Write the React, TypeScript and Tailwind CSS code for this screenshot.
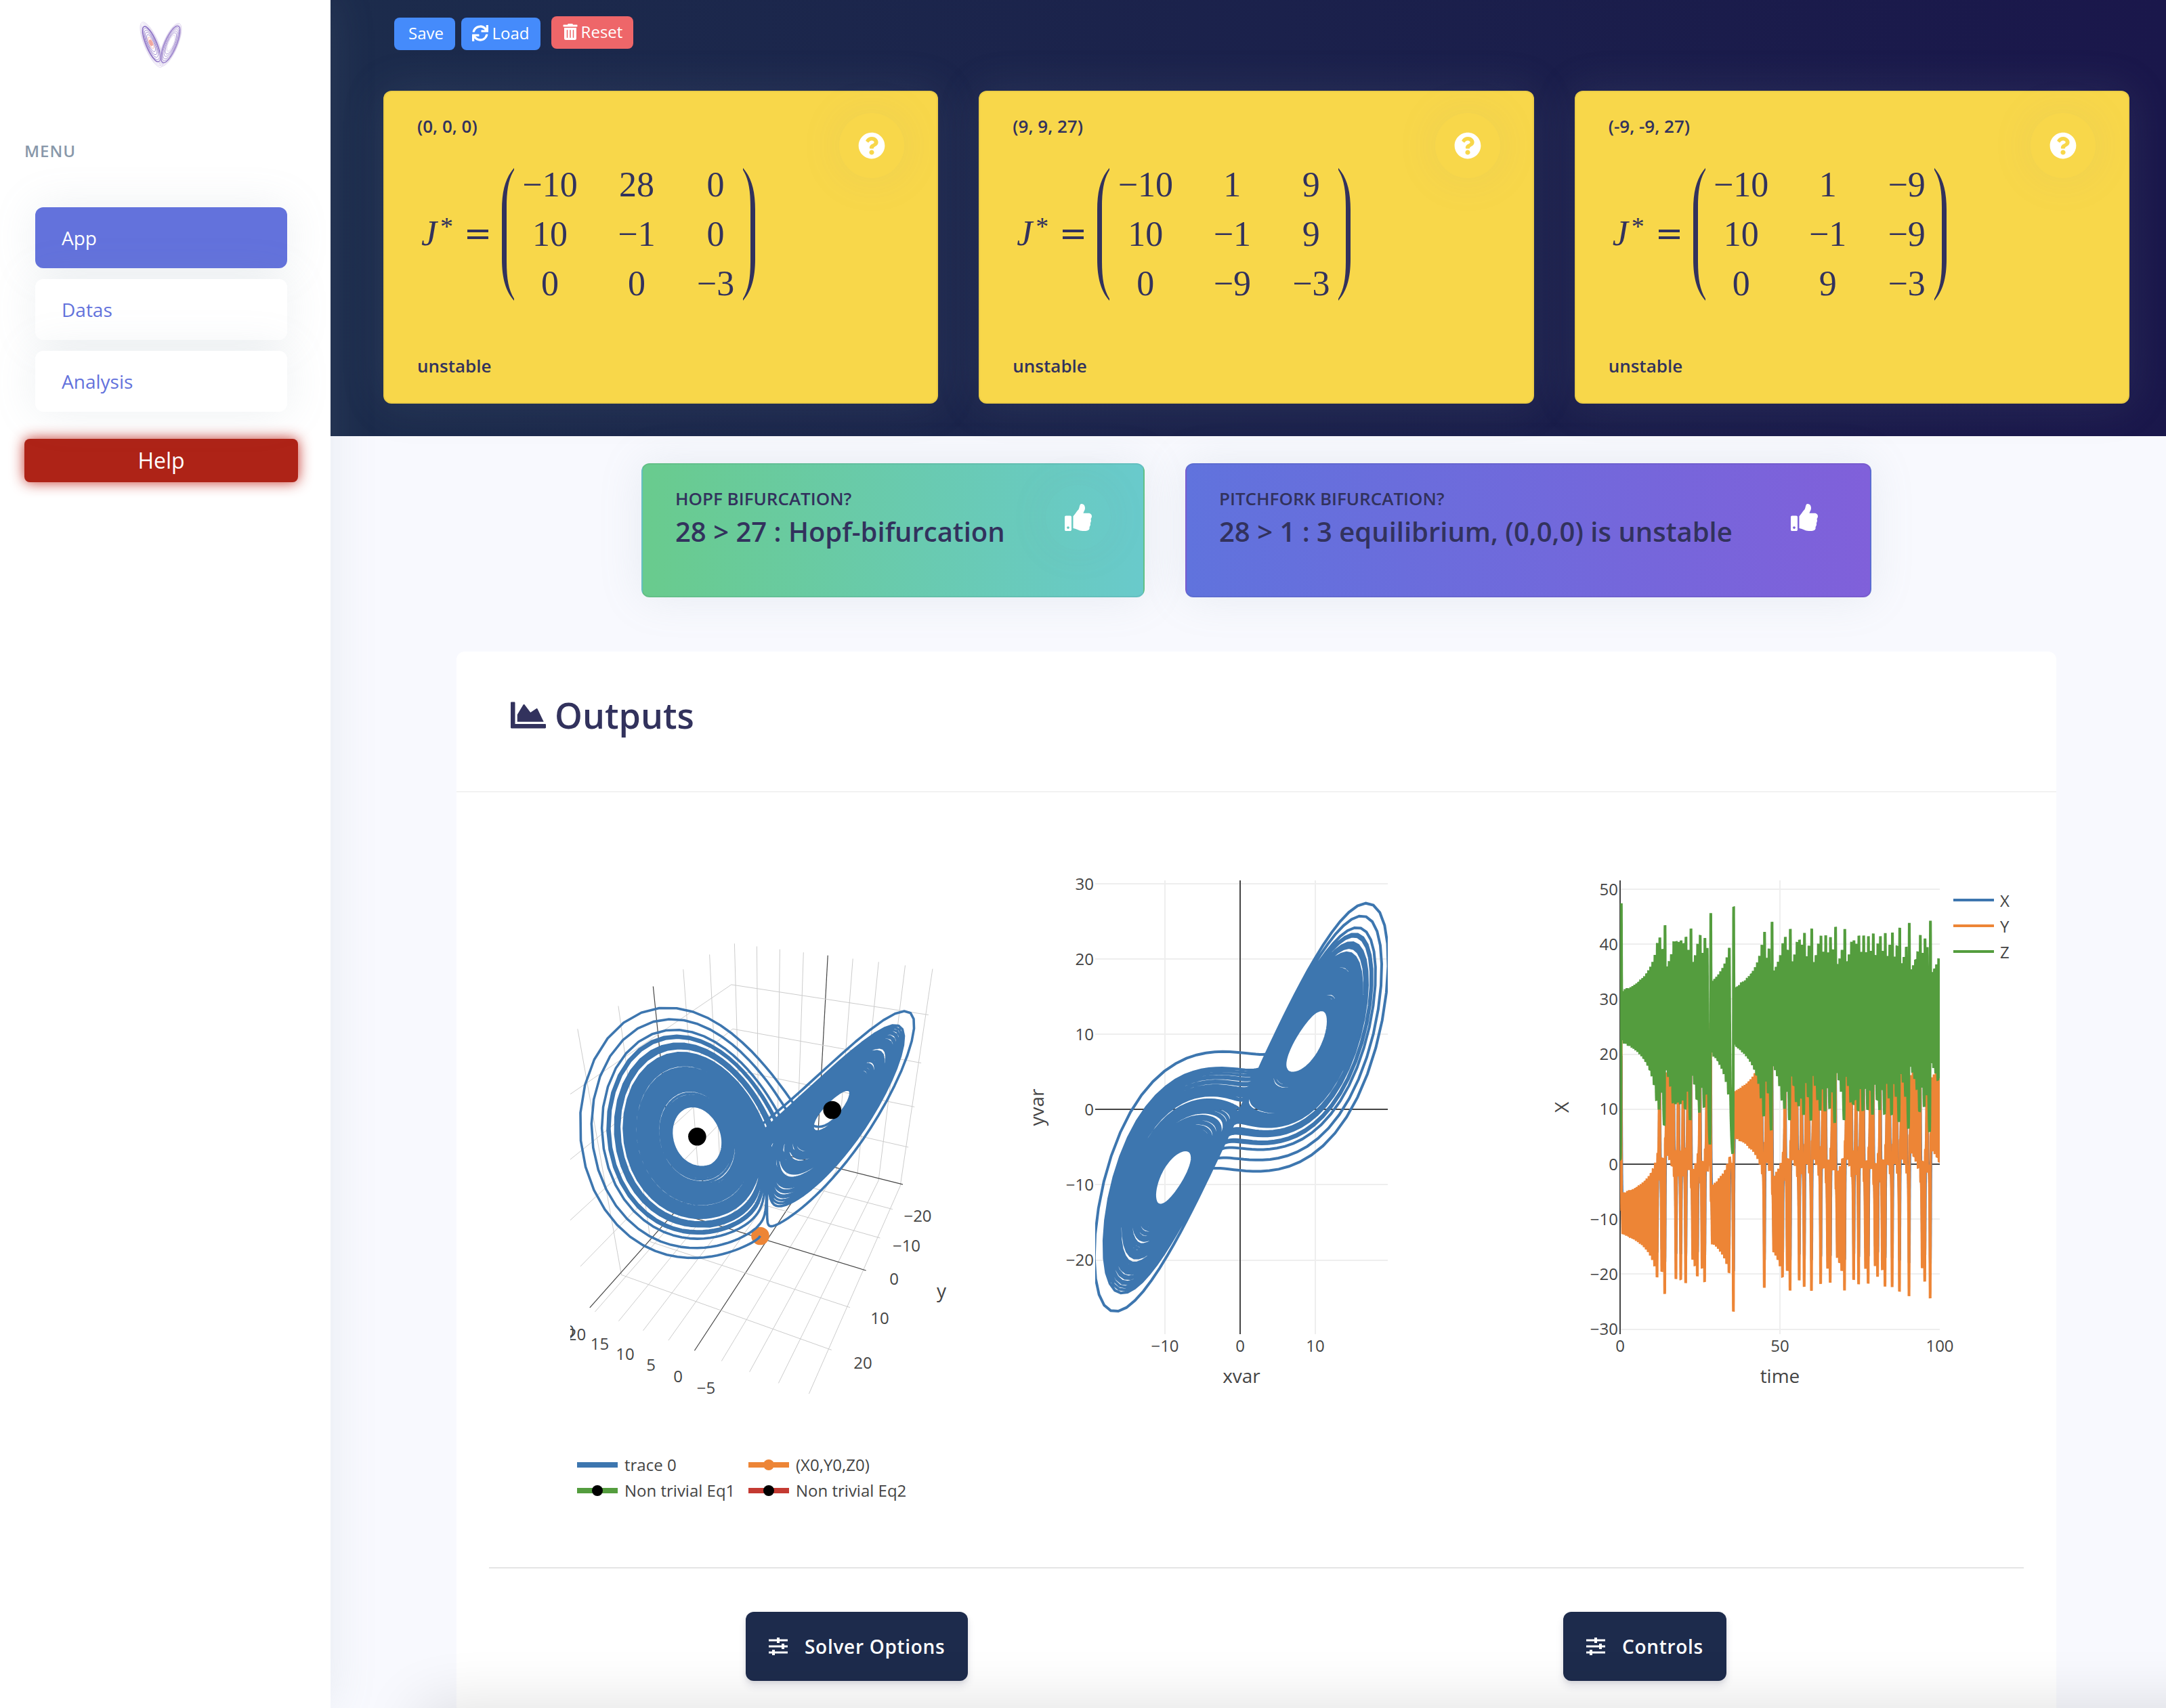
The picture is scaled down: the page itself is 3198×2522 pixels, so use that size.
import { FaQuestionCircle, FaThumbsUp, FaSync, FaTrashAlt, FaChartArea } from "react-icons/fa";

type Vec3 = [number, number, number];

const DT = 0.01;

/** One RK4 step of the Lorenz system (sigma = 10, rho = 28, beta = 3). */
function step([x, y, z]: Vec3): Vec3 {
  const a0 = 10 * (y - x), a1 = x * (28 - z) - y, a2 = x * y - 3 * z;
  let X = x + 0.005 * a0, Y = y + 0.005 * a1, Z = z + 0.005 * a2;
  const b0 = 10 * (Y - X), b1 = X * (28 - Z) - Y, b2 = X * Y - 3 * Z;
  X = x + 0.005 * b0; Y = y + 0.005 * b1; Z = z + 0.005 * b2;
  const c0 = 10 * (Y - X), c1 = X * (28 - Z) - Y, c2 = X * Y - 3 * Z;
  X = x + DT * c0; Y = y + DT * c1; Z = z + DT * c2;
  const d0 = 10 * (Y - X), d1 = X * (28 - Z) - Y, d2 = X * Y - 3 * Z;
  return [
    x + (DT / 6) * (a0 + 2 * b0 + 2 * c0 + d0),
    y + (DT / 6) * (a1 + 2 * b1 + 2 * c1 + d1),
    z + (DT / 6) * (a2 + 2 * b2 + 2 * c2 + d2),
  ];
}

const corrections = [-1, -6, -3, -38, -2, -25, 13, 0, -29, -1, 1, -20, -13, 1, 3, -7, 5, 6, -14, 1, 4, -11, 67, -3, -1, -6, -14, -1, 0];

function solve(): Vec3[] {
  const out: Vec3[] = [[1, 1, 1]];
  let s: Vec3 = [1, 1, 1];
  for (let i = 0; i < 10000; i++) {
    if (i >= 1300 && (i - 1300) % 300 === 0) s = [s[0], s[1], s[2] + corrections[(i - 1300) / 300] * 0.0025];
    s = step(s);
    out.push(s);
  }
  return out;
}
const orbit = solve();

const toPath = (pts: [number, number][]) => "M" + pts.map(([x, y]) => x.toFixed(1) + "," + y.toFixed(1)).join("L");

// Perspective camera of the 3D scene: rows of a 3x4 matrix whose last entry is 1.
const CAM = [-0.44413, -0.21254, -0.00917, 0.10764, -0.11302, 0.25032, -0.40751, 0.42685, 0.0554, -0.12228, -0.08851];

function project(px: number, py: number, pz: number): [number, number] {
  const x = px / 20, y = py / 20, z = pz / 20;
  const w = CAM[8] * x + CAM[9] * y + CAM[10] * z + 1;
  return [
    1100 + (300 * (CAM[0] * x + CAM[1] * y + CAM[2] * z + CAM[3])) / w,
    1700 + (300 * (CAM[4] * x + CAM[5] * y + CAM[6] * z + CAM[7])) / w,
  ];
}

const BOX = { x: [-20.5, 21], y: [-28.8, 29.4], z: [-0.6, 48.7] };

function Line3({ a, b, zero }: { a: Vec3; b: Vec3; zero?: boolean }) {
  const [x1, y1] = project(...a);
  const [x2, y2] = project(...b);
  return <line x1={x1} y1={y1} x2={x2} y2={y2} stroke={zero ? "#444" : "#ccc"} strokeWidth={zero ? 1.2 : 1} />;
}

function Attractor3D() {
  const xs = [-20, -15, -10, -5, 0, 5, 10, 15, 20];
  const ys = [-20, -10, 0, 10, 20];
  const zs = [0, 10, 20, 30, 40];
  const [x0, x1] = BOX.x;
  const [y0, y1] = BOX.y;
  const [z0, z1] = BOX.z;
  const labels: [string, number, number][] = [
    ["−20", 1355, 1795], ["−10", 1338.5, 1839], ["0", 1320, 1888.5], ["10", 1299, 1946], ["20", 1274, 2012],
    ["20", 851.5, 1970], ["15", 885.5, 1984.5], ["10", 923, 1999.5], ["5", 961, 2015.5], ["0", 1001, 2032], ["−5", 1042.5, 2049],
    ["−10", 1090, 2066], ["0", 841, 1965],
  ];
  const origin = project(1, 1, 1);
  const eq1 = project(9, 9, 27);
  const eq2 = project(-9, -9, 27);
  return (
    <svg className="block h-[768px] w-[568px]" viewBox="842 1290 568 768">
      {xs.map((x) => (
        <g key={"x" + x}>
          <Line3 a={[x, y0, z0]} b={[x, y1, z0]} zero={x === 0} />
          <Line3 a={[x, y0, z0]} b={[x, y0, z1]} zero={x === 0} />
        </g>
      ))}
      {ys.map((y) => (
        <g key={"y" + y}>
          <Line3 a={[x0, y, z0]} b={[x1, y, z0]} zero={y === 0} />
          <Line3 a={[x1, y, z0]} b={[x1, y, z1]} zero={y === 0} />
        </g>
      ))}
      {zs.map((z) => (
        <g key={"z" + z}>
          <Line3 a={[x0, y0, z]} b={[x1, y0, z]} zero={z === 0} />
          <Line3 a={[x1, y0, z]} b={[x1, y1, z]} zero={z === 0} />
        </g>
      ))}
      <circle cx={origin[0]} cy={origin[1]} r="13.3" fill="#ed8536" />
      <path d={toPath(orbit.map((p) => project(...p)))} fill="none" stroke="#3d76af" strokeWidth="3.6" strokeLinejoin="round" />
      <circle cx={eq1[0]} cy={eq1[1]} r="13.3" />
      <circle cx={eq2[0]} cy={eq2[1]} r="13.3" />
      <g fontSize="24" fill="#444" textAnchor="middle">
        {labels.map(([t, x, y], i) => (
          <text key={i} x={x} y={y + 8.6}>{t}</text>
        ))}
        <text x="1390" y="1916" fontSize="28">y</text>
      </g>
    </svg>
  );
}

function PhasePlot() {
  const px = (x: number) => 1831 + x * 11.07;
  const py = (y: number) => 1638.3 - y * 11.11;
  return (
    <svg className="block h-[768px] w-[560px]" viewBox="1500 1290 560 768">
      <clipPath id="phase-clip"><rect x="1617" y="1300" width="432" height="670" /></clipPath>
      <g stroke="#eee" strokeWidth="2">
        {[-10, 10].map((x) => <line key={x} x1={Math.round(px(x))} x2={Math.round(px(x))} y1="1300" y2="1970" />)}
        {[-20, -10, 10, 20, 30].map((y) => <line key={y} x1="1617" x2="2049" y1={Math.round(py(y))} y2={Math.round(py(y))} />)}
      </g>
      <g stroke="#444" strokeWidth="2">
        <line x1="1831" x2="1831" y1="1300" y2="1970" />
        <line x1="1617" x2="2049" y1="1638" y2="1638" />
      </g>
      <path clipPath="url(#phase-clip)" d={toPath(orbit.map(([x, y]) => [px(x), py(y)]))} fill="none" stroke="#3d76af" strokeWidth="4" strokeMiterlimit="2" />
      <g fontSize="24" fill="#444">
        {[30, 20, 10, 0, -10, -20].map((y) => (
          <text key={y} x="1615" y={py(y) + 8.6} textAnchor="end">{String(y).replace("-", "−")}</text>
        ))}
        <text x="1720" y="1996" textAnchor="middle">−10</text>
        <text x="1831" y="1996" textAnchor="middle">0</text>
        <text x="1942" y="1996" textAnchor="middle">10</text>
      </g>
      <g fontSize="28" fill="#444" textAnchor="middle">
        <text x="1833" y="2042">xvar</text>
        <text transform="translate(1541 1635) rotate(-90)">yvar</text>
      </g>
    </svg>
  );
}

function TimePlot() {
  const px = (t: number) => 2392 + t * 4.72;
  const py = (v: number) => 1719 - v * 8.121;
  const series: [string, number, string][] = [["X", 0, "#3d76af"], ["Y", 1, "#ed8536"], ["Z", 2, "#549d3e"]];
  return (
    <svg className="block h-[768px] w-[700px]" viewBox="2280 1290 700 768">
      <clipPath id="time-clip"><rect x="2392" y="1300" width="472" height="670" /></clipPath>
      <g stroke="#eee" strokeWidth="2">
        <line x1="2628" x2="2628" y1="1300" y2="1970" />
        {[-30, -20, -10, 10, 20, 30, 40, 50].map((v) => <line key={v} x1="2392" x2="2864" y1={Math.round(py(v))} y2={Math.round(py(v))} />)}
      </g>
      <g stroke="#444" strokeWidth="2">
        <line x1="2392" x2="2392" y1="1300" y2="1970" />
        <line x1="2392" x2="2864" y1="1719" y2="1719" />
      </g>
      <g clipPath="url(#time-clip)">
        {series.map(([name, k, color]) => (
          <path key={name} d={toPath(orbit.map((p, i) => [px(i * DT), py(p[k])]))} fill="none" stroke={color} strokeWidth="4" strokeMiterlimit="2" />
        ))}
      </g>
      <g fontSize="24" fill="#444">
        {[50, 40, 30, 20, 10, 0, -10, -20, -30].map((v) => (
          <text key={v} x="2389" y={py(v) + 8.6} textAnchor="end">{String(v).replace("-", "−")}</text>
        ))}
        {[0, 50, 100].map((t) => <text key={t} x={px(t)} y="1996" textAnchor="middle">{t}</text>)}
        {series.map(([name, k, color]) => (
          <g key={name}>
            <line x1="2884" x2="2944" y1={1329 + k * 38} y2={1329 + k * 38} stroke={color} strokeWidth="4" />
            <text x="2953" y={1339 + k * 38}>{name}</text>
          </g>
        ))}
      </g>
      <g fontSize="28" fill="#444" textAnchor="middle">
        <text x="2628" y="2042">time</text>
        <text transform="translate(2316 1635) rotate(-90)">X</text>
      </g>
    </svg>
  );
}

function LegendItem({ label, color, dot }: { label: string; color: string; dot?: string }) {
  return (
    <div className="flex h-[38px] items-center gap-[10px] text-[24px] leading-[38px] text-[#444]">
      <svg className="h-[20px] w-[60px]" viewBox="0 0 60 20">
        <rect y="6" width="60" height="8" fill={color} />
        {dot && <circle cx="30" cy="10" r="8" fill={dot} />}
      </svg>
      <span>{label}</span>
    </div>
  );
}

function Paren({ flip }: { flip?: boolean }) {
  return (
    <svg className={flip ? "-ml-[5px] h-[196px] w-[18px] -scale-x-100" : "h-[196px] w-[18px]"} viewBox="0 0 18 196">
      <path fill="#32325d" d="M18 0C6 14 0 32 0 62V134C0 164 6 182 18 196V193C10 180 7 164 7 138V58C7 32 10 16 18 3Z" />
    </svg>
  );
}

function EquilibriumCard({ point, matrix }: { point: string; matrix: string[][] }) {
  return (
    <div className="flex h-[462px] justify-between rounded-[12px] border-2 border-black/5 bg-[#f8d74a] px-[48px] pt-[31px] shadow-[0_0_64px_rgba(136,152,170,0.15)]">
      <div className="text-[#32325d]">
        <div className="text-[26px] leading-[38px] font-semibold">{point}</div>
        <div className="mt-[43px] flex h-[196px] items-center font-['Liberation_Serif',serif] text-[52px] leading-none">
          <span className="w-[34px] pb-[3px] pl-[6px] italic">J</span>
          <span className="w-[24px] pb-[24px] text-[38px]">*</span>
          <svg className="ml-[16px] h-[14px] w-[31px]" viewBox="0 0 31 14">
            <path stroke="#32325d" strokeWidth="4" d="M0 2H31M0 12H31" />
          </svg>
          <div className="ml-[20px] flex items-center">
            <Paren />
            <div className="-mt-[1px] -ml-[4px] grid grid-cols-[114px_142px_91px] text-center">
              {matrix.flat().map((v, i) => (
                <span key={i} className="h-[73px] leading-[73px]">{v}</span>
              ))}
            </div>
            <Paren flip />
          </div>
        </div>
        <div className="mt-[76px] text-[26px] leading-[40px] font-semibold">unstable</div>
      </div>
      <div className="flex size-[96px] items-center justify-center rounded-full bg-[#f8d74a] text-white shadow-[0_0_64px_rgba(136,152,170,0.1)]">
        <FaQuestionCircle className="size-[40px]" />
      </div>
    </div>
  );
}

function SliderIcon() {
  return (
    <svg className="h-[26px] w-[28px]" viewBox="0 0 28 26">
      <path stroke="#fff" strokeWidth="3" d="M0 4H28M0 13H28M0 22H28" />
      <path stroke="#fff" strokeWidth="4" d="M14 0V8M21 9V17M7 18V26" />
    </svg>
  );
}

function DarkButton({ label }: { label: string }) {
  return (
    <button className="flex h-[102px] items-center gap-[25px] rounded-[12px] bg-[#1d2b4c] px-[34px] text-[28px] font-semibold tracking-[0.025em] text-white shadow-[0_8px_12px_rgba(50,50,93,0.11),0_2px_6px_rgba(0,0,0,0.08)]">
      <SliderIcon />
      {label}
    </button>
  );
}

const rings = [0.12, 0.25, 0.38, 0.5, 0.6, 0.7, 0.78, 0.86, 0.93, 1];

function Logo() {
  return (
    <svg className="mt-[30px] ml-[203px] h-[74px] w-[68px]" viewBox="0 0 68 74" fill="none">
      <g transform="translate(21 36) rotate(-23)">
        {rings.map((r) => (
          <ellipse key={r} rx={10.5 * r} ry={36 * r} cy={(r - 1) * 4} stroke={r < 0.35 ? "#f0a59c" : r > 0.8 ? "#dcd2ec" : "#8a6fc4"} strokeWidth={r === 0.78 ? 1.7 : 0.7} />
        ))}
        <ellipse rx="2.5" ry="5" cy="-3" fill="#f2a8a0" />
      </g>
      <g transform="translate(48.5 36) rotate(23)">
        {rings.slice(2).map((r) => (
          <ellipse key={r} rx={10.5 * r} ry={34 * r} cy={(r - 1) * 4} stroke={r > 0.9 || r < 0.45 ? "#d3c6e6" : "#9a82cc"} strokeWidth={r === 0.86 ? 1.7 : 0.7} />
        ))}
      </g>
    </svg>
  );
}

export default function App() {
  return (
    <div className="relative flex h-[2522px] w-[3198px] overflow-hidden bg-[#f8f9fe] font-['Open_Sans',sans-serif]">
      <aside className="relative z-10 w-[488px] shrink-0 bg-white shadow-[0_0_64px_rgba(136,152,170,0.15)]">
        <Logo />
        <div className="mt-[99px] ml-[36px] text-[24px] leading-[40px] font-semibold tracking-[0.04em] text-[#8898aa]">MENU</div>
        <nav className="mt-[63px] ml-[52px] flex w-[372px] flex-col gap-[16px] text-[28px] text-[#6372dc]">
          <a className="flex h-[90px] items-center rounded-[12px] bg-[#6372dc] pl-[39px] text-white shadow-[0_0_64px_rgba(136,152,170,0.15)]">App</a>
          <a className="flex h-[90px] items-center rounded-[12px] bg-white pl-[39px] shadow-[0_0_64px_rgba(136,152,170,0.15)]">Datas</a>
          <a className="flex h-[90px] items-center rounded-[12px] bg-white pl-[39px] shadow-[0_0_64px_rgba(136,152,170,0.15)]">Analysis</a>
        </nav>
        <button className="mt-[40px] ml-[36px] flex h-[64px] w-[404px] items-center justify-center rounded-[8px] bg-[#ae2317] text-[32px] text-white shadow-[0_0_20px_rgba(190,30,20,0.9)]">Help</button>
      </aside>

      <main className="min-w-0 flex-1">
        <header className="h-[644px] bg-[linear-gradient(87deg,#1c2c4c_0%,#1a174b_100%)] pt-[24px]">
          <div className="ml-[94px] flex h-[50px] text-[24px] leading-[46px] text-white">
            <button className="mt-[2px] h-[48px] w-[90px] rounded-[8px] bg-[#458bfb] pb-[2px] pl-[4px]">Save</button>
            <button className="mt-[2px] ml-[9px] flex h-[48px] w-[117px] items-center justify-center gap-[6px] rounded-[8px] bg-[#458bfb] pr-[1px] pb-[2px]">
              <FaSync className="size-[24px]" />
              Load
            </button>
            <button className="ml-[16px] flex h-[48px] w-[121px] items-center justify-center gap-[4px] rounded-[8px] bg-[#ee6669] pb-[3px]">
              <FaTrashAlt className="size-[24px]" />
              Reset
            </button>
          </div>
          <div className="mt-[60px] ml-[78px] grid w-[2578px] grid-cols-3 gap-[60px]">
            <EquilibriumCard point="(0, 0, 0)" matrix={[["−10", "28", "0"], ["10", "−1", "0"], ["0", "0", "−3"]]} />
            <EquilibriumCard point="(9, 9, 27)" matrix={[["−10", "1", "9"], ["10", "−1", "9"], ["0", "−9", "−3"]]} />
            <EquilibriumCard point="(-9, -9, 27)" matrix={[["−10", "1", "−9"], ["10", "−1", "−9"], ["0", "9", "−3"]]} />
          </div>
        </header>

        <section className="mt-[40px] ml-[459px] flex gap-[60px] text-[#32325d]">
          <div className="flex h-[198px] w-[743px] justify-between rounded-[12px] border-2 border-black/5 bg-[linear-gradient(87deg,#69cb8d_0%,#69cacc_100%)] px-[48px] pt-[32px] shadow-[0_0_64px_rgba(136,152,170,0.15)]">
            <div>
              <div className="text-[26px] leading-[37px] font-semibold">HOPF BIFURCATION?</div>
              <div className="text-[40px] leading-[60px] font-semibold">28 &gt; 27 : Hopf-bifurcation</div>
            </div>
            <div className="-mt-[2px] flex size-[96px] items-center justify-center rounded-full pr-[1px] text-white shadow-[0_0_64px_rgba(136,152,170,0.08)]">
              <FaThumbsUp className="size-[40px]" />
            </div>
          </div>
          <div className="flex h-[198px] w-[1013px] justify-between rounded-[12px] border-2 border-black/5 bg-[linear-gradient(87deg,#6073dd_0%,#8060da_100%)] px-[48px] pt-[32px] shadow-[0_0_64px_rgba(136,152,170,0.15)]">
            <div>
              <div className="text-[26px] leading-[37px] font-semibold">PITCHFORK BIFURCATION?</div>
              <div className="text-[40px] leading-[60px] font-semibold">28 &gt; 1 : 3 equilibrium, (0,0,0) is unstable</div>
            </div>
            <div className="-mt-[2px] flex size-[96px] items-center justify-center rounded-full pr-[2px] text-white">
              <FaThumbsUp className="size-[40px]" />
            </div>
          </div>
        </section>

        <section className="mt-[80px] ml-[186px] h-[1700px] w-[2362px] rounded-[12px] bg-white">
          <h1 className="flex h-[208px] gap-[13px] border-b-2 border-black/5 pt-[64px] pl-[80px] text-[52px] leading-[60px] font-semibold text-[#32325d]">
            <FaChartArea className="mt-[4px] size-[52px]" />
            Outputs
          </h1>
          <div className="mt-[120px] flex pl-[168px]">
            <div className="w-[568px]">
              <Attractor3D />
              <div className="mt-[86px] ml-[10px] grid grid-cols-[253px_auto]">
                <LegendItem label="trace 0" color="#3d76af" />
                <LegendItem label="(X0,Y0,Z0)" color="#ed8536" dot="#ed8536" />
                <LegendItem label="Non trivial Eq1" color="#549d3e" dot="#000" />
                <LegendItem label="Non trivial Eq2" color="#c43a32" dot="#000" />
              </div>
            </div>
            <div className="ml-[90px]"><PhasePlot /></div>
            <div className="ml-[220px]"><TimePlot /></div>
          </div>
          <hr className="mx-[48px] mt-[94px] border-t-2 border-[#e5e5e5]" />
          <div className="grid grid-cols-[1207px_auto] justify-items-start pt-[64px] pl-[427px]">
            <DarkButton label="Solver Options" />
            <DarkButton label="Controls" />
          </div>
        </section>
      </main>
      <div className="pointer-events-none absolute top-[2522px] -right-[120px] left-[620px] h-[80px] shadow-[0_0_90px_rgba(0,0,0,0.14)]" />
    </div>
  );
}
